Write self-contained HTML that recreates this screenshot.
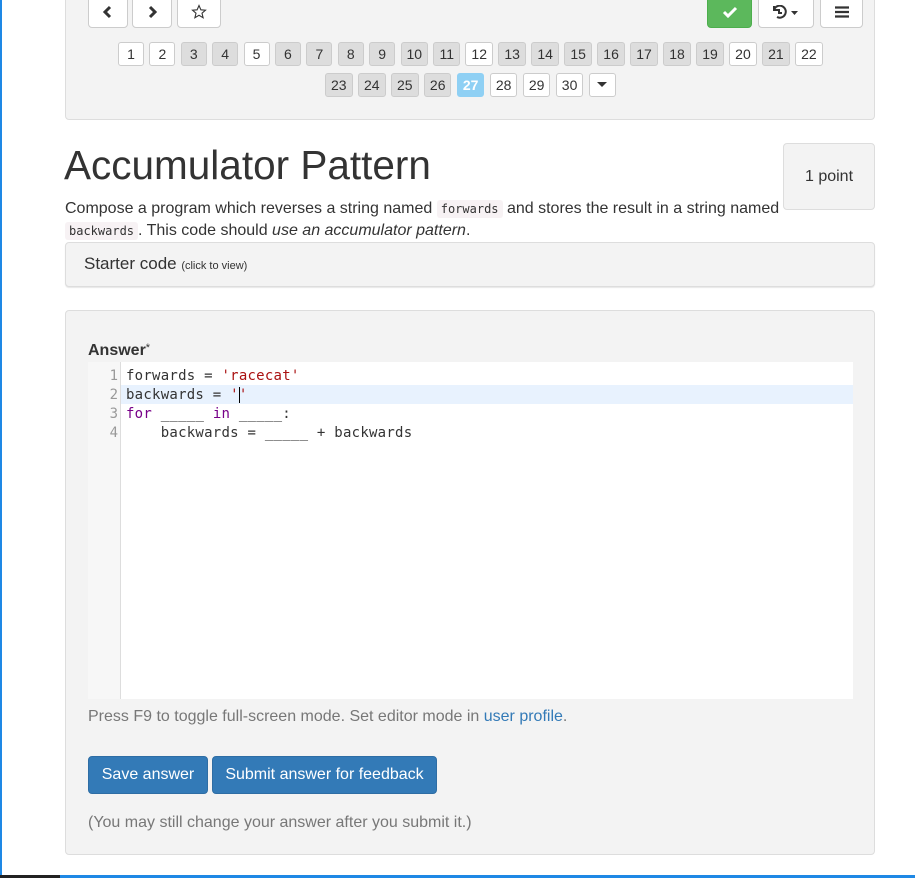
<!DOCTYPE html>
<html><head><meta charset="utf-8"><style>
*{box-sizing:border-box}
body{margin:0;width:915px;height:878px;overflow:hidden;background:#fff;font-family:"Liberation Sans",sans-serif;color:#333;position:relative}
.lb{position:absolute;left:0;top:0;width:2px;height:878px;background:#1e88e5}
.bb{position:absolute;left:60px;top:875px;width:855px;height:3px;background:#1e88e5}
.bd{position:absolute;left:0;top:875px;width:60px;height:3px;background:#222}
.well{position:absolute;background:#f3f3f3;border:1px solid #ddd;border-radius:4px}
.btn{position:absolute;background:#fff;border:1px solid #ccc;border-radius:4px;display:flex;align-items:center;justify-content:center;font-size:16px;color:#333}
.row{position:absolute;display:flex;gap:5.4px}
.p{height:24px;min-width:26px;padding:0 5px;border:1px solid #ccc;border-radius:3px;background:#fff;font-size:14px;display:flex;align-items:center;justify-content:center;color:#333}
.p.g{background:#ddd}
.p.a{background:#8fd0f4;border-color:#8fd0f4;color:#fff;font-weight:bold}
code{font-family:"DejaVu Sans Mono",monospace;font-size:12px;background:#f7f2f4;padding:2px 4px;border-radius:3px;color:#333}
.code{position:absolute;left:88px;top:362px;width:765px;height:337px;background:#fff}
.gut{position:absolute;left:0;top:0;width:33px;height:337px;background:#f7f7f7;border-right:1px solid #ddd}
.ln{position:absolute;font-family:"DejaVu Sans Mono",monospace;font-size:14px;line-height:19px;white-space:pre;letter-spacing:0.25px}
.num{color:#999;width:30px;text-align:right;left:0;letter-spacing:0}
.kw{color:#708}.st{color:#a11}
.bp{position:absolute;top:756px;height:38px;background:#337ab7;border:1px solid #2e6da4;border-radius:4px;color:#fff;font-size:16px;display:flex;align-items:center;justify-content:center}
</style></head><body>
<div class="lb"></div><div class="bd"></div><div class="bb"></div>
<div class="well" style="left:65px;top:-5px;width:810px;height:125px"></div>
<div class="btn" style="left:88px;top:-5px;width:40px;height:33px"><svg width="14" height="14" viewBox="0 0 14 14"><path d="M9 2L4 7l5 5" stroke="#333" stroke-width="3" fill="none"/></svg></div>
<div class="btn" style="left:132px;top:-5px;width:40px;height:33px"><svg width="14" height="14" viewBox="0 0 14 14"><path d="M5 2l5 5-5 5" stroke="#333" stroke-width="3" fill="none"/></svg></div>
<div class="btn" style="left:177px;top:-5px;width:44px;height:33px"><svg width="16" height="16" viewBox="0 0 16 16"><path d="M8 1.5l1.9 4.3 4.6.4-3.5 3 1.1 4.5L8 11.3l-4.1 2.4 1.1-4.5-3.5-3 4.6-.4z" stroke="#333" stroke-width="1.1" fill="none"/></svg></div>
<div class="btn" style="left:707px;top:-5px;width:45px;height:33px;background:#5cb85c;border-color:#4cae4c"><svg width="16" height="14" viewBox="0 0 16 14"><path d="M2 7l4 4 8-8" stroke="#fff" stroke-width="3" fill="none"/></svg></div>
<div class="btn" style="left:758px;top:-5px;width:56px;height:33px"><svg width="30" height="14" viewBox="0 0 30 14"><path d="M3 5A6 6 0 1 1 6 12M3 1v4h4M8 4v4h3" stroke="#333" stroke-width="2" fill="none"/><path d="M20 6h7l-3.5 4z" fill="#333"/></svg></div>
<div class="btn" style="left:820px;top:-5px;width:43px;height:33px"><svg width="14" height="12" viewBox="0 0 14 12"><path d="M0 1.5h14M0 6h14M0 10.5h14" stroke="#333" stroke-width="2.2"/></svg></div>
<div class="row" style="left:118px;top:42px">
<div class="p">1</div><div class="p">2</div><div class="p g">3</div><div class="p g">4</div><div class="p">5</div><div class="p g">6</div><div class="p g">7</div><div class="p g">8</div><div class="p g">9</div><div class="p g">10</div><div class="p g">11</div><div class="p">12</div><div class="p g">13</div><div class="p g">14</div><div class="p g">15</div><div class="p g">16</div><div class="p g">17</div><div class="p g">18</div><div class="p g">19</div><div class="p">20</div><div class="p g">21</div><div class="p">22</div></div>
<div class="row" style="left:325px;top:73px">
<div class="p g">23</div><div class="p g">24</div><div class="p g">25</div><div class="p g">26</div><div class="p a">27</div><div class="p">28</div><div class="p">29</div><div class="p">30</div><div class="p" style="width:27px"><svg width="10" height="6"><path d="M0 0h10L5 5z" fill="#333"/></svg></div></div>
<div style="position:absolute;left:64px;top:140px;font-size:40.5px;line-height:50px">Accumulator Pattern</div>
<div class="well" style="left:783px;top:143px;width:92px;height:67px;display:flex;align-items:center;justify-content:center;font-size:16px">1 point</div>
<div style="position:absolute;left:65px;top:198px;width:720px;font-size:16px;line-height:22px">Compose a program which reverses a string named <code>forwards</code> and stores the result in a string named <code>backwards</code>. This code should <i>use an accumulator pattern</i>.</div>
<div class="well" style="left:65px;top:242px;width:810px;height:45px;box-shadow:0 1px 1px rgba(0,0,0,.1)"><div style="position:absolute;left:18px;top:11px;font-size:17px">Starter code <span style="font-size:11px">(click to view)</span></div></div>
<div class="well" style="left:65px;top:310px;width:810px;height:545px"></div>
<div style="position:absolute;left:88px;top:342px;font-size:16px;font-weight:bold">Answer<span style="font-weight:normal;font-size:11px;vertical-align:top">*</span></div>
<div class="code"><div class="gut"></div>
<div style="position:absolute;left:33px;top:23px;width:732px;height:19px;background:#e8f2fe"></div>
<div class="ln num" style="top:5px">1</div><div class="ln num" style="top:24px">2</div><div class="ln num" style="top:43px">3</div><div class="ln num" style="top:62px">4</div>
<div class="ln" style="left:38px;top:5px">forwards = <span class="st">'racecat'</span></div>
<div class="ln" style="left:38px;top:24px">backwards = <span class="st">''</span></div>
<div style="position:absolute;left:151px;top:25px;width:1px;height:16px;background:#000"></div>
<div class="ln" style="left:38px;top:43px"><span class="kw">for</span> _____ <span class="kw">in</span> _____:</div>
<div class="ln" style="left:38px;top:62px">    backwards = _____ + backwards</div>
</div>
<div style="position:absolute;left:88px;top:708px;font-size:16px;color:#777">Press F9 to toggle full-screen mode. Set editor mode in <span style="color:#337ab7">user profile</span>.</div>
<div class="bp" style="left:88px;width:120px">Save answer</div>
<div class="bp" style="left:212px;width:225px">Submit answer for feedback</div>
<div style="position:absolute;left:88px;top:814px;font-size:16px;color:#777">(You may still change your answer after you submit it.)</div>
</body></html>
